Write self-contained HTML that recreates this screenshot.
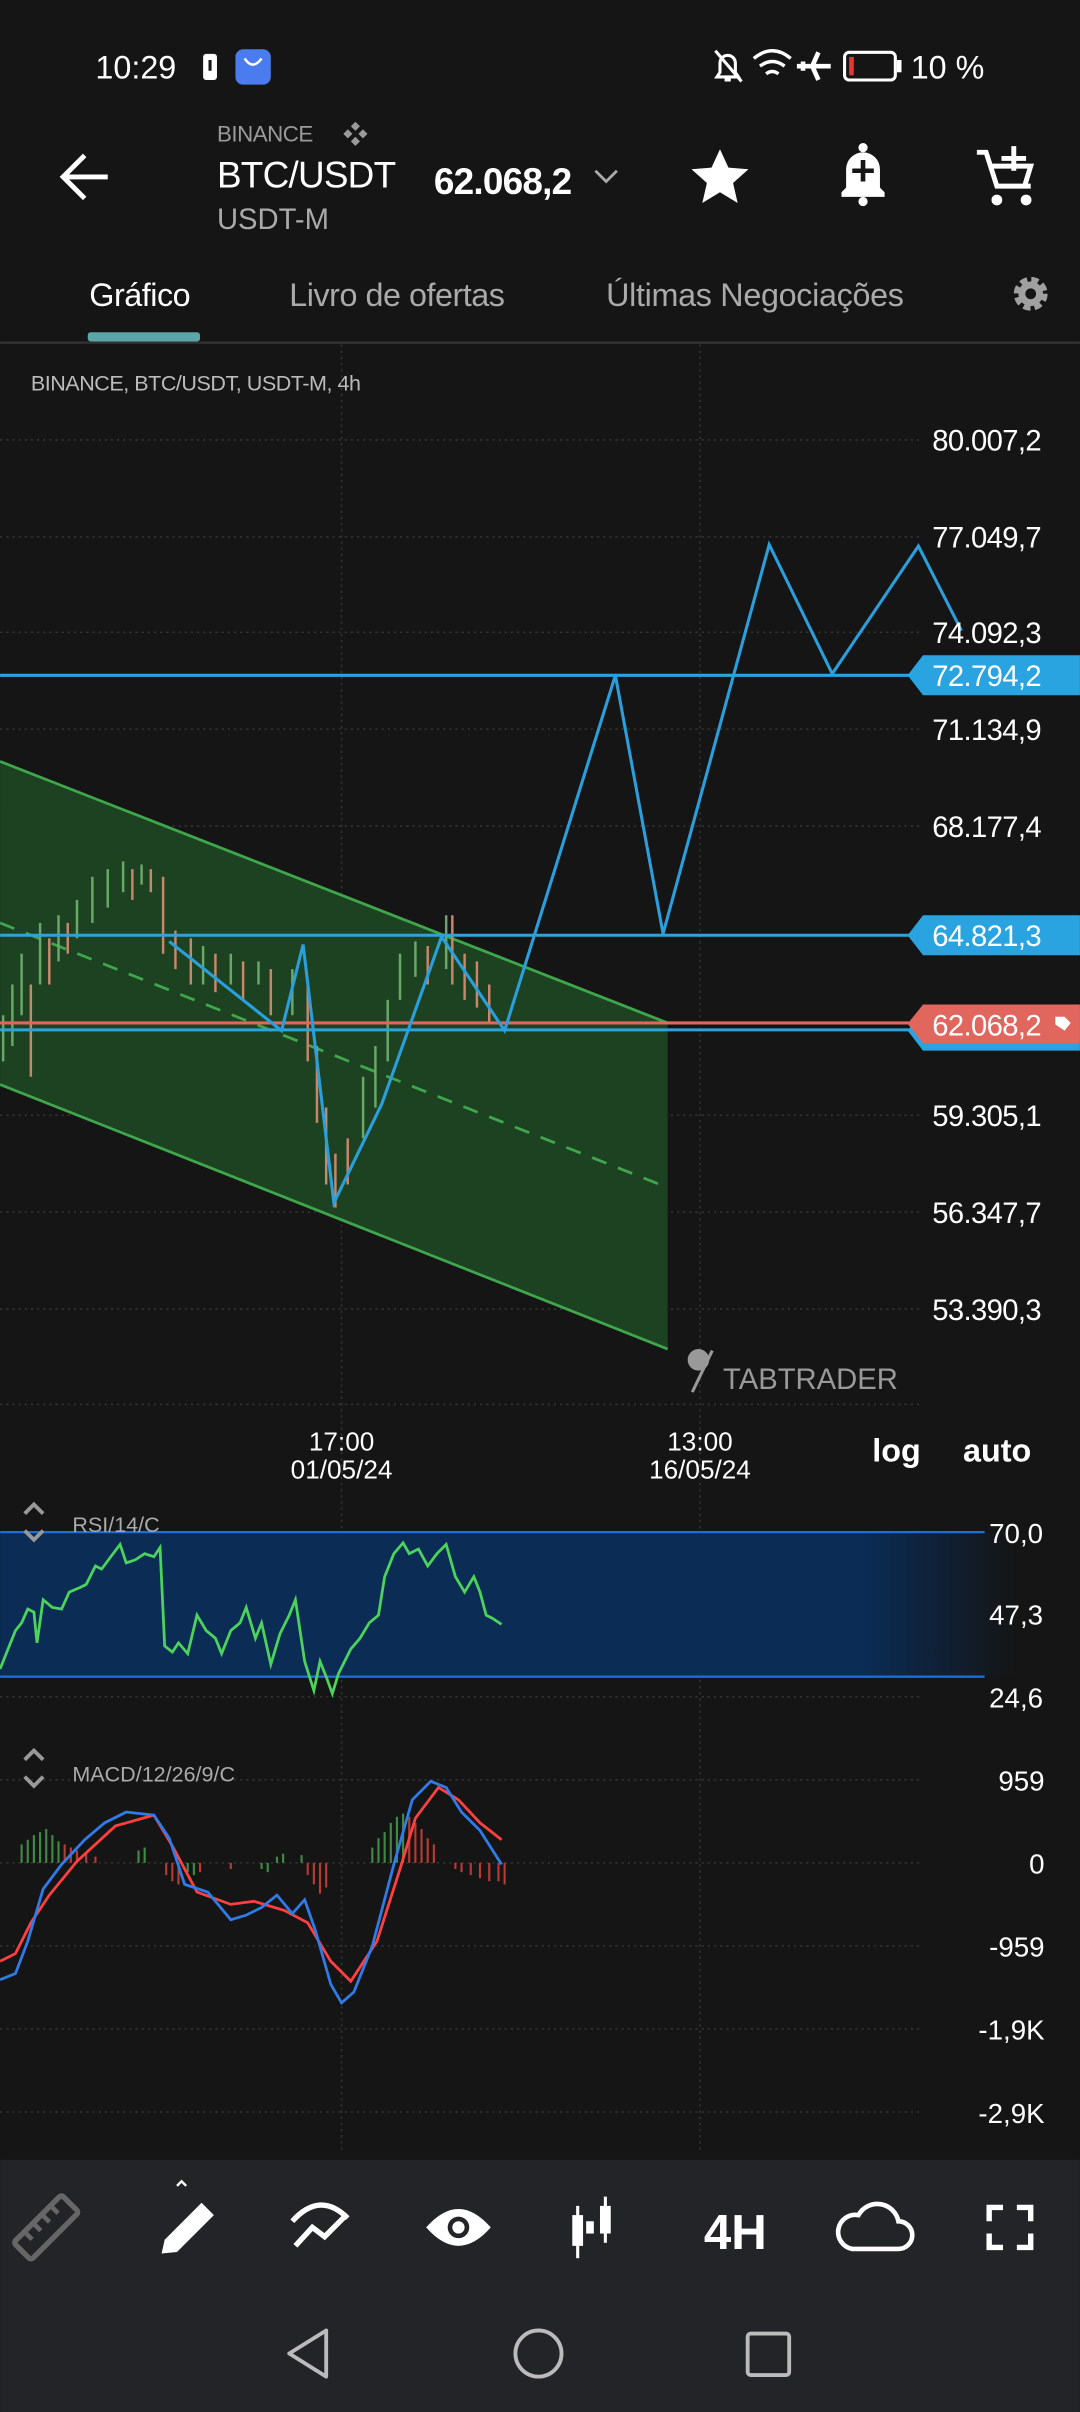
<!DOCTYPE html>
<html><head><meta charset="utf-8"><style>
html,body{margin:0;padding:0;background:#151515;}
svg{display:block}
text{font-family:"Liberation Sans",sans-serif}
</style></head><body>
<svg width="1080" height="2412" viewBox="0 0 702 1568" xmlns="http://www.w3.org/2000/svg">
<rect width="702" height="1568" fill="#151515"/>
<!-- status bar -->
<text x="62" y="51" fill="#fff" font-size="21">10:29</text>
<rect x="132" y="35" width="9" height="17" rx="2" fill="#fff"/><rect x="135.5" y="39" width="2" height="7" fill="#151515"/>
<rect x="153" y="32" width="23" height="23" rx="5" fill="#4a7cf0"/><path d="M159 38 q5 8 11 0" stroke="#fff" stroke-width="1.6" fill="none"/>
<path d="M466 50 h14 l-2-3 v-6 a5 5 0 0 0-10 0 v6z M471 52 h4" stroke="#fff" stroke-width="2" fill="none"/><line x1="465" y1="33" x2="482" y2="53" stroke="#fff" stroke-width="2"/>
<path d="M490 38 q12-10 24 0 M494 43 q8-6 16 0 M498 48 q4-3 8 0" stroke="#fff" stroke-width="2.2" fill="none"/>
<path d="M518 43 h22 M532 34 l-4 9 4 9 M522 40 v6" stroke="#fff" stroke-width="3" fill="none"/>
<rect x="549" y="34" width="33" height="18" rx="3" stroke="#fff" stroke-width="2" fill="none"/><rect x="583" y="39" width="3" height="8" fill="#fff"/><rect x="552" y="37" width="3" height="12" fill="#e33"/>
<text x="592" y="51" fill="#fff" font-size="21">10 %</text>
<!-- header -->
<path d="M70 115 H42 M55 101 L41 115 L55 129" stroke="#fff" stroke-width="3.2" fill="none"/>
<text x="141" y="92" fill="#9a9a9a" font-size="14.5" letter-spacing="-0.3">BINANCE</text>
<g fill="#9a9a9a" transform="translate(231,87) scale(0.7)"><rect x="-3" y="-10" width="6" height="6" transform="rotate(45 0 -7)"/><rect x="-3" y="4" width="6" height="6" transform="rotate(45 0 7)"/><rect x="-10" y="-3" width="6" height="6" transform="rotate(45 -7 0)"/><rect x="4" y="-3" width="6" height="6" transform="rotate(45 7 0)"/></g>
<text x="141" y="122" fill="#fff" font-size="24" letter-spacing="-0.5">BTC/USDT</text>
<text x="141" y="149" fill="#aaa" font-size="19">USDT-M</text>
<text x="282" y="126" fill="#fff" font-size="24" font-weight="bold" letter-spacing="-0.5">62.068,2</text>
<path d="M387 111 l7 7 7-7" stroke="#aaa" stroke-width="1.8" fill="none"/>
<path d="M468 97 l5.5 12 13 1 -10 9 3 13 -11.5-7 -11.5 7 3-13 -10-9 13-1z" fill="#fff"/>
<path d="M547 128 h28 v-3 l-3-3 v-12 a11 11 0 0 0-22 0 v12 l-3 3z" fill="#fff"/><circle cx="561" cy="96" r="3" fill="#fff"/><circle cx="561" cy="131" r="3" fill="#fff"/>
<path d="M561 104 v14 M554 111 h14" stroke="#151515" stroke-width="3"/>
<path d="M635 99 h6 l7 22 h22 M644 108 h26 l-4 13 M659 95 v16 M651 103 h16" stroke="#fff" stroke-width="3.2" fill="none"/><circle cx="648" cy="130" r="3.5" fill="#fff"/><circle cx="667" cy="130" r="3.5" fill="#fff"/>
<!-- tabs -->
<text x="58" y="199" fill="#fff" font-size="21" letter-spacing="-0.3">Gráfico</text>
<text x="188" y="199" fill="#aaa" font-size="21" letter-spacing="-0.3">Livro de ofertas</text>
<text x="394" y="199" fill="#aaa" font-size="21" letter-spacing="-0.2">Últimas Negociações</text>
<g transform="translate(670,191)"><circle r="8" fill="none" stroke="#a0a0a0" stroke-width="6" stroke-dasharray="4 2.3"/><circle r="8" fill="#a0a0a0"/><circle r="3.5" fill="#151515"/></g>
<rect x="57" y="216" width="73" height="6" rx="2" fill="#5aa6a8"/>
<rect x="0" y="222" width="702" height="1.5" fill="#333"/>
<text x="20" y="254" fill="#bbb" font-size="14" letter-spacing="-0.3">BINANCE, BTC/USDT, USDT-M, 4h</text>
<!-- grid -->
<g stroke="#333" stroke-width="1" stroke-dasharray="1.5 2.5">
<line x1="0" y1="286" x2="600" y2="286"/><line x1="0" y1="349" x2="600" y2="349"/><line x1="0" y1="411" x2="600" y2="411"/><line x1="0" y1="474" x2="600" y2="474"/><line x1="0" y1="537" x2="600" y2="537"/><line x1="0" y1="725" x2="600" y2="725"/><line x1="0" y1="788" x2="600" y2="788"/><line x1="0" y1="851" x2="600" y2="851"/><line x1="0" y1="913" x2="600" y2="913"/>
<line x1="222" y1="224" x2="222" y2="1400"/><line x1="455" y1="224" x2="455" y2="1400"/>
<line x1="0" y1="1103" x2="600" y2="1103"/><line x1="0" y1="1157" x2="600" y2="1157"/><line x1="0" y1="1211" x2="600" y2="1211"/><line x1="0" y1="1265" x2="600" y2="1265"/><line x1="0" y1="1319" x2="600" y2="1319"/><line x1="0" y1="1373" x2="600" y2="1373"/>
</g>
<!-- channel -->
<polygon points="0,495 434,665 434,877 0,705" fill="#1d4222"/>
<line x1="0" y1="495" x2="434" y2="665" stroke="#3fa64c" stroke-width="1.8"/>
<line x1="0" y1="705" x2="434" y2="877" stroke="#3fa64c" stroke-width="1.8"/>
<line x1="0" y1="600" x2="434" y2="772" stroke="#3fa64c" stroke-width="1.8" stroke-dasharray="10 8"/>
<!-- candles -->
<g stroke-width="1.6">
<g stroke="#6aa86a"><line x1="2" y1="690" x2="2" y2="660"/><line x1="8" y1="680" x2="8" y2="640"/><line x1="14" y1="660" x2="14" y2="620"/><line x1="26" y1="640" x2="26" y2="600"/><line x1="38" y1="625" x2="38" y2="595"/><line x1="50" y1="610" x2="50" y2="585"/><line x1="60" y1="600" x2="60" y2="570"/><line x1="70" y1="590" x2="70" y2="565"/><line x1="80" y1="580" x2="80" y2="560"/><line x1="92" y1="575" x2="92" y2="562"/><line x1="132" y1="640" x2="132" y2="615"/><line x1="150" y1="640" x2="150" y2="620"/><line x1="168" y1="640" x2="168" y2="625"/><line x1="190" y1="660" x2="190" y2="630"/><line x1="236" y1="740" x2="236" y2="700"/><line x1="244" y1="720" x2="244" y2="680"/><line x1="252" y1="690" x2="252" y2="650"/><line x1="260" y1="650" x2="260" y2="620"/><line x1="270" y1="635" x2="270" y2="612"/><line x1="290" y1="630" x2="290" y2="595"/></g>
<g stroke="#c8876a"><line x1="20" y1="700" x2="20" y2="640"/><line x1="32" y1="640" x2="32" y2="610"/><line x1="44" y1="620" x2="44" y2="600"/><line x1="86" y1="585" x2="86" y2="565"/><line x1="98" y1="580" x2="98" y2="565"/><line x1="106" y1="620" x2="106" y2="570"/><line x1="114" y1="630" x2="114" y2="605"/><line x1="124" y1="640" x2="124" y2="610"/><line x1="140" y1="645" x2="140" y2="620"/><line x1="158" y1="650" x2="158" y2="625"/><line x1="176" y1="660" x2="176" y2="630"/><line x1="200" y1="690" x2="200" y2="640"/><line x1="206" y1="730" x2="206" y2="680"/><line x1="212" y1="770" x2="212" y2="720"/><line x1="218" y1="785" x2="218" y2="750"/><line x1="226" y1="770" x2="226" y2="740"/><line x1="278" y1="640" x2="278" y2="615"/><line x1="294" y1="640" x2="294" y2="595"/><line x1="302" y1="650" x2="302" y2="620"/><line x1="310" y1="655" x2="310" y2="625"/><line x1="318" y1="665" x2="318" y2="640"/></g>
</g>
<!-- horizontal levels -->
<line x1="0" y1="439" x2="600" y2="439" stroke="#2aa4e0" stroke-width="2"/>
<line x1="0" y1="608" x2="600" y2="608" stroke="#2aa4e0" stroke-width="2"/>
<line x1="0" y1="669.5" x2="600" y2="669.5" stroke="#2aa4e0" stroke-width="2"/>
<line x1="0" y1="665" x2="600" y2="665" stroke="#e0665e" stroke-width="2"/>
<!-- zigzag -->
<polyline points="110,612 183,670 197,614 217,782 248,718 287,609 328,670 400,439 431,607 500,354 541,438 597,355 625,410" fill="none" stroke="#2a9fdc" stroke-width="2"/>
<!-- price labels -->
<g fill="#fff" font-size="19" letter-spacing="-0.4">
<text x="606" y="293">80.007,2</text><text x="606" y="356">77.049,7</text><text x="606" y="418">74.092,3</text><text x="606" y="481">71.134,9</text><text x="606" y="544">68.177,4</text><text x="606" y="732">59.305,1</text><text x="606" y="795">56.347,7</text><text x="606" y="858">53.390,3</text>
</g>
<path d="M600 426 H702 V452 H600 L590 439z" fill="#2aa4e0"/><text x="606" y="446" fill="#fff" font-size="19" letter-spacing="-0.4">72.794,2</text>
<path d="M600 595 H702 V621 H600 L590 608z" fill="#2aa4e0"/><text x="606" y="615" fill="#fff" font-size="19" letter-spacing="-0.4">64.821,3</text>
<path d="M600 657 H702 V683 H600 L590 670z" fill="#2aa4e0"/>
<path d="M600 653 H702 V678 H600 L590 665.5z" fill="#e0665e"/><text x="606" y="673" fill="#fff" font-size="19" letter-spacing="-0.4">62.068,2</text>
<path d="M686 661 l6 0 4 4 -4 5 -6-4z" fill="#fff"/>
<!-- tabtrader -->
<circle cx="454" cy="884" r="7" fill="#999"/><line x1="463" y1="878" x2="450" y2="905" stroke="#999" stroke-width="2"/>
<text x="470" y="903" fill="#999" font-size="19">TABTRADER</text>
<!-- time -->
<g fill="#fff" font-size="17" text-anchor="middle"><text x="222" y="943">17:00</text><text x="222" y="961">01/05/24</text><text x="455" y="943">13:00</text><text x="455" y="961">16/05/24</text></g>
<text x="567" y="950" fill="#fff" font-size="21" font-weight="bold">log</text><text x="626" y="950" fill="#fff" font-size="21" font-weight="bold">auto</text>
<!-- RSI -->
<defs><linearGradient id="g" x1="0" x2="1"><stop offset="0.85" stop-color="#0a2c55"/><stop offset="1" stop-color="#0a2c55" stop-opacity="0"/></linearGradient></defs>
<rect x="0" y="996" width="660" height="94" fill="url(#g)"/>
<line x1="0" y1="996" x2="640" y2="996" stroke="#1f6ed0" stroke-width="1.5"/><line x1="0" y1="1090" x2="640" y2="1090" stroke="#1f6ed0" stroke-width="1.5"/>
<path d="M16 984 l6-6 6 6 M16 995 l6 6 6-6" stroke="#999" stroke-width="2.5" fill="none"/>
<text x="47" y="996" fill="#aaa" font-size="14">RSI/14/C</text>
<polyline points="0,1085 6,1070 10,1060 14,1055 18,1046 22,1048 24,1068 28,1040 34,1045 40,1046 45,1035 52,1032 56,1030 62,1018 66,1020 72,1012 78,1004 82,1016 88,1014 94,1010 100,1012 104,1006 107,1070 112,1074 116,1068 122,1075 128,1050 134,1060 140,1065 144,1075 150,1060 156,1055 160,1045 166,1065 170,1055 176,1082 182,1062 188,1050 192,1040 198,1080 204,1099 208,1080 212,1090 216,1101 220,1088 228,1072 234,1065 240,1055 246,1050 250,1025 256,1010 262,1003 266,1010 272,1007 278,1018 284,1010 290,1004 296,1025 302,1035 308,1025 312,1035 316,1050 320,1052 326,1056" fill="none" stroke="#4cd35c" stroke-width="1.8"/>
<g fill="#fff" font-size="18"><text x="643" y="1003">70,0</text><text x="643" y="1056">47,3</text><text x="643" y="1110">24,6</text></g>
<!-- MACD -->
<path d="M16 1144 l6-6 6 6 M16 1155 l6 6 6-6" stroke="#999" stroke-width="2.5" fill="none"/>
<text x="47" y="1158" fill="#aaa" font-size="14">MACD/12/26/9/C</text>
<g stroke-width="1.4">
<g stroke="#3d8a45"><path d="M14 1211v-12 M18 1211v-15 M22 1211v-18 M26 1211v-20 M30 1211v-22 M34 1211v-18 M38 1211v-14 M90 1211v-8 M94 1211v-10 M170 1211v4 M174 1211v6 M242 1211v-10 M246 1211v-16 M250 1211v-20 M254 1211v-26 M258 1211v-30 M262 1211v-32 M122 1211v6 M126 1211v8 M180 1211v-4 M184 1211v-6 M196 1211v-5"/></g>
<g stroke="#b83a30"><path d="M42 1211v-12 M46 1211v-10 M50 1211v-8 M56 1211v-6 M62 1211v-4 M108 1211v8 M112 1211v12 M116 1211v14 M130 1211v6 M150 1211v4 M200 1211v8 M204 1211v14 M208 1211v20 M212 1211v16 M266 1211v-30 M270 1211v-26 M274 1211v-22 M278 1211v-16 M282 1211v-12 M296 1211v4 M300 1211v6 M306 1211v8 M312 1211v10 M318 1211v12 M324 1211v12 M328 1211v14"/></g>
</g>
<polyline points="0,1275 10,1270 20,1250 32,1232 50,1210 75,1187 100,1180 112,1200 128,1230 150,1238 165,1236 185,1242 200,1250 215,1275 228,1288 245,1262 260,1215 270,1182 285,1162 298,1170 312,1185 326,1196" fill="none" stroke="#ff4040" stroke-width="1.8"/>
<polyline points="0,1287 10,1283 18,1262 28,1228 40,1212 55,1196 68,1185 82,1178 100,1180 110,1195 120,1225 135,1230 150,1248 160,1245 170,1240 180,1232 190,1244 198,1235 205,1255 215,1290 222,1302 230,1295 242,1265 256,1212 268,1170 280,1158 290,1162 300,1178 312,1190 326,1212" fill="none" stroke="#2f7be8" stroke-width="1.8"/>
<g fill="#fff" font-size="18" text-anchor="end"><text x="679" y="1164">959</text><text x="679" y="1218">0</text><text x="679" y="1272">-959</text><text x="679" y="1326">-1,9K</text><text x="679" y="1380">-2,9K</text></g>
<!-- toolbar -->
<rect x="0" y="1404" width="702" height="164" fill="#232427"/>
<g transform="translate(30,1448) rotate(-45)"><rect x="-22" y="-8" width="44" height="16" rx="2" fill="none" stroke="#666" stroke-width="3.5"/><path d="M-12 -8v7 M-4 -8v7 M4 -8v7 M12 -8v7" stroke="#666" stroke-width="3"/></g>
<path d="M105 1465 l2-9 24-24 8 8 -24 24z" fill="#fff"/><path d="M115 1421 l3-3 3 3" stroke="#fff" stroke-width="1.5" fill="none"/>
<path d="M190 1444 q18-20 36-2 M192 1460 l11-12 8 6 14-14" stroke="#fff" stroke-width="3.5" fill="none"/>
<path d="M277 1448 q21-24 42 0 q-21 24-42 0z" fill="#fff"/><circle cx="298" cy="1448" r="7" fill="#232427"/><circle cx="298" cy="1448" r="4" fill="#fff"/>
<g fill="#fff"><rect x="372" y="1440" width="7" height="20"/><rect x="374.5" y="1434" width="2" height="34"/><rect x="381" y="1444" width="5" height="8"/><rect x="390" y="1434" width="7" height="18"/><rect x="392.5" y="1428" width="2" height="30"/></g>
<text x="478" y="1462" fill="#fff" font-size="32" font-weight="bold" text-anchor="middle">4H</text>
<path d="M554 1462 h30 a9 9 0 0 0 0-18 a14 14 0 0 0-26-4 a11 11 0 0 0-4 22z" fill="none" stroke="#fff" stroke-width="3"/>
<path d="M643 1444 v-9 h9 M661 1435 h9 v9 M670 1452 v9 h-9 M652 1461 h-9 v-9" stroke="#fff" stroke-width="3.5" fill="none"/>
<!-- nav -->
<path d="M212 1515 L188 1530 L212 1545z" fill="none" stroke="#bbb" stroke-width="2.5" stroke-linejoin="round"/>
<circle cx="350" cy="1530" r="15" fill="none" stroke="#bbb" stroke-width="2.5"/>
<rect x="486" y="1517" width="27" height="27" rx="2" fill="none" stroke="#bbb" stroke-width="2.5"/>
</svg>
</body></html>
